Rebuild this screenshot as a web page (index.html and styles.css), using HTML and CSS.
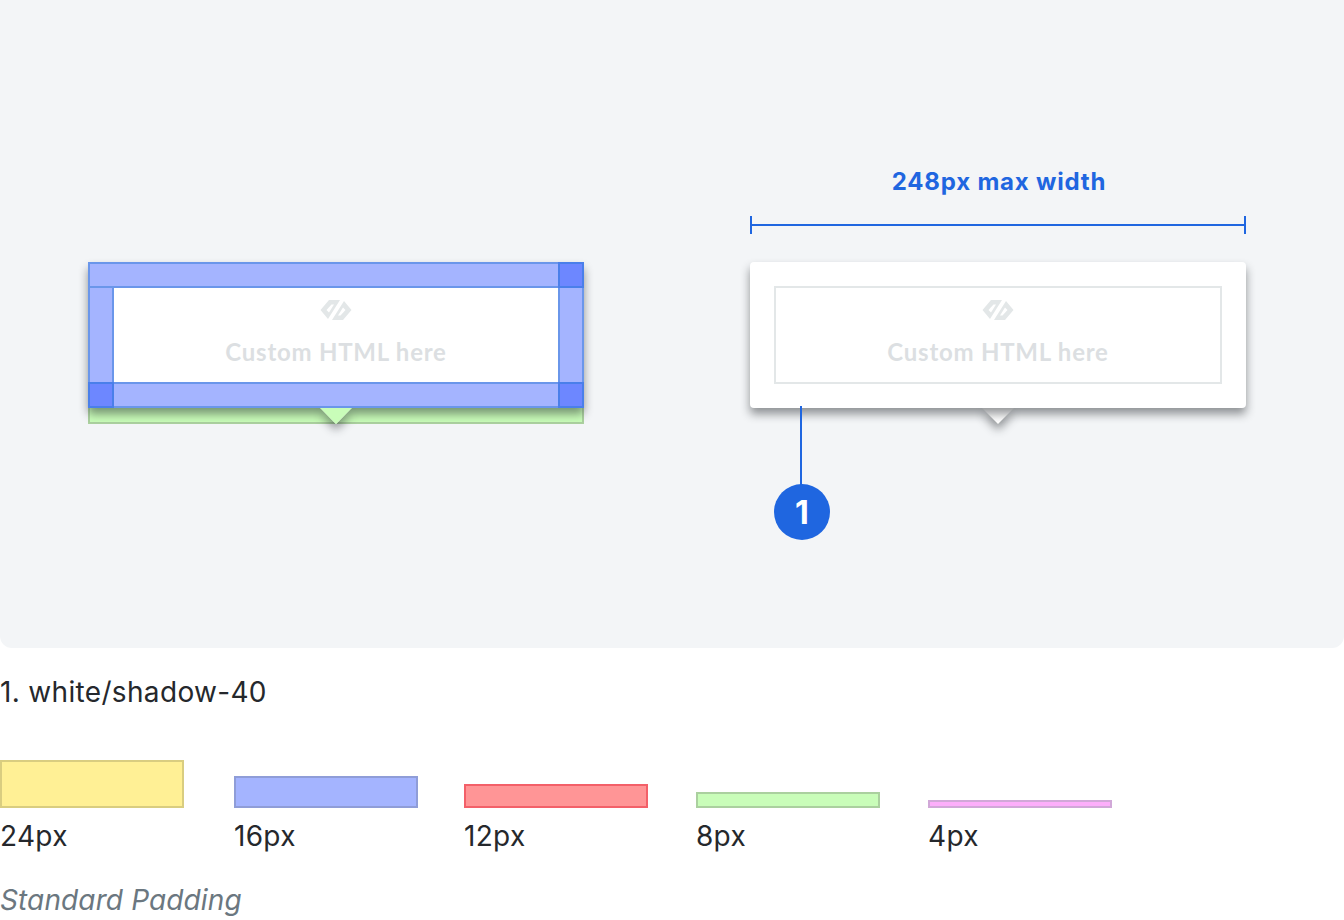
FILE: index.html
```html
<!DOCTYPE html>
<html lang="en">
<head>
<meta charset="utf-8">
<title>Tooltip padding spec</title>
<link rel="stylesheet" href="styles.css">
</head>
<body>
<section class="panel">
  <div class="strip"></div>
  <div class="arrow-wrap arrow-left"><div class="arrow"></div></div>
  <div class="tip tip-left">
    <div class="content">
      <svg class="logo" viewBox="0 0 32 20"><path fill-rule="evenodd" d="M0.500 10L9 0H20L8 19ZM6.500 10L11.500 4.500H14L9 12.500ZM31.500 10L23 20H12L24 1ZM25.500 10L20.500 15.500H18L23 7.500Z"/></svg>
      <span class="html-label">Custom HTML here</span>
    </div>
  </div>
  <div class="arrow-top arrow-left"></div>
  <div class="pad pad-top"></div>
  <div class="pad pad-bottom"></div>
  <div class="pad pad-l"></div>
  <div class="pad pad-r"></div>
  <div class="corner corner-tr"></div>
  <div class="corner corner-bl"></div>
  <div class="corner corner-br"></div>

  <div class="dim-label">248px max width</div>
  <div class="dim-line"></div>
  <div class="arrow-wrap arrow-right"><div class="arrow"></div></div>
  <div class="tip tip-right">
    <div class="content boxed">
      <svg class="logo" viewBox="0 0 32 20"><path fill-rule="evenodd" d="M0.500 10L9 0H20L8 19ZM6.500 10L11.500 4.500H14L9 12.500ZM31.500 10L23 20H12L24 1ZM25.500 10L20.500 15.500H18L23 7.500Z"/></svg>
      <span class="html-label">Custom HTML here</span>
    </div>
  </div>
  <div class="leader"></div>
  <div class="badge">1</div>
</section>

<p class="caption">1. white/shadow-40</p>

<div class="swatches">
  <div class="swatch s24"><div class="bar"></div><span>24px</span></div>
  <div class="swatch s16"><div class="bar"></div><span>16px</span></div>
  <div class="swatch s12"><div class="bar"></div><span>12px</span></div>
  <div class="swatch s8"><div class="bar"></div><span>8px</span></div>
  <div class="swatch s4"><div class="bar"></div><span>4px</span></div>
</div>

<p class="note">Standard Padding</p>
</body>
</html>
```
FILE: styles.css
```css
* { box-sizing: border-box; }
html, body { margin: 0; padding: 0; background: #fff; }
body {
  width: 1344px;
  height: 920px;
  overflow: hidden;
  font-family: Inter, "Liberation Sans", sans-serif;
  color: #25282c;
}
.panel {
  position: relative;
  height: 648px;
  background: #f3f5f7;
  border-radius: 0 0 12px 12px;
}
.tip {
  position: absolute;
  top: 262px;
  width: 496px;
  height: 146px;
  padding: 24px;
  background: #fff;
  border-radius: 4px;
  box-shadow: 0 6px 10px rgba(20, 24, 28, .45);
}
.tip-left { left: 88px; }
.tip-right { left: 750px; }
.content {
  height: 98px;
  display: flex;
  flex-direction: column;
  align-items: center;
}
.boxed { border: 2px solid #e3e7e8; }
.tip-left .content { padding-top: 2px; }
.logo {
  width: 32px;
  height: 20px;
  margin-top: 12px;
  flex: none;
  fill: #e3e7e8;
}
.html-label {
  margin-top: 14px;
  font: 700 24px/36px Lato, sans-serif;
  letter-spacing: .75px;
  color: #dcdfe2;
}
.strip {
  position: absolute;
  left: 88px;
  top: 400px;
  width: 496px;
  height: 24px;
  background: #c9fdb9;
  border: 2px solid #abd09f;
}
.arrow-wrap {
  position: absolute;
  top: 408px;
  width: 32px;
  height: 16px;
  filter: drop-shadow(0 6px 5px rgba(20, 24, 28, .45));
}
.arrow {
  width: 32px;
  height: 16px;
  background: #fff;
  clip-path: polygon(0 0, 100% 0, 50% 100%);
}
.arrow-left { left: 320px; }
.arrow-right { left: 982px; }
.arrow-top {
  position: absolute;
  top: 408px;
  width: 32px;
  height: 16px;
  background: #c9fdb9;
  clip-path: polygon(0 0, 100% 0, 50% 100%);
}
.pad {
  position: absolute;
  background: #a4b4ff;
  border: 2px solid #6a96ea;
}
.pad-top { left: 88px; top: 262px; width: 496px; height: 26px; }
.pad-bottom { left: 88px; top: 382px; width: 496px; height: 26px; }
.pad-l { left: 88px; top: 286px; width: 26px; height: 98px; }
.pad-r { left: 558px; top: 286px; width: 26px; height: 98px; }
.corner {
  position: absolute;
  width: 26px;
  height: 26px;
  background: #6d87ff;
  border: 2px solid #4a7fea;
}
.corner-tr { left: 558px; top: 262px; }
.corner-bl { left: 88px; top: 382px; }
.corner-br { left: 558px; top: 382px; }
.dim-label {
  position: absolute;
  left: 750px;
  top: 166px;
  width: 498px;
  text-align: center;
  font-weight: 700;
  font-size: 24px;
  line-height: 32px;
  letter-spacing: .8px;
  color: #1f66e0;
}
.dim-line {
  position: absolute;
  left: 750px;
  top: 216px;
  width: 496px;
  height: 18px;
  border-left: 2px solid #1f66e0;
  border-right: 2px solid #1f66e0;
  background: linear-gradient(#1f66e0, #1f66e0) center / 100% 2px no-repeat;
}
.leader {
  position: absolute;
  left: 800px;
  top: 406px;
  width: 2px;
  height: 80px;
  background: #1f66e0;
}
.badge {
  position: absolute;
  left: 774px;
  top: 484px;
  width: 56px;
  height: 56px;
  border-radius: 50%;
  background: #1f66e0;
  color: #fff;
  display: flex;
  align-items: center;
  justify-content: center;
  font-weight: 700;
  font-size: 32px;
}
.caption {
  margin: 24px 0 0;
  font-size: 28px;
  line-height: 40px;
  letter-spacing: .33px;
}
.swatches {
  margin-top: 48px;
  display: grid;
  grid-template-columns: 234px 230px 232px 232px 184px;
  align-items: end;
  height: 94px;
}
.swatch {
  display: flex;
  flex-direction: column;
  font-size: 28px;
  line-height: 40px;
}
.swatch span { display: block; margin-top: 8px; height: 38px; line-height: 40px; letter-spacing: .3px; }
.bar { width: 184px; border: 2px solid; }
.s24 .bar { height: 48px; background: #fff095; border-color: #d9cd80; }
.s16 .bar { height: 32px; background: #a4b4ff; border-color: #8f9dd8; }
.s12 .bar { height: 24px; background: #ff9596; border-color: #f36069; }
.s8 .bar { height: 16px; background: #c9fdb9; border-color: #abd09f; }
.s4 .bar { height: 8px; background: #fdaefb; border-color: #d1a8d8; }
.note {
  margin: 26px 0 0;
  font-size: 28px;
  line-height: 40px;
  font-style: italic;
  letter-spacing: .12px;
  color: #6b7780;
}
```
